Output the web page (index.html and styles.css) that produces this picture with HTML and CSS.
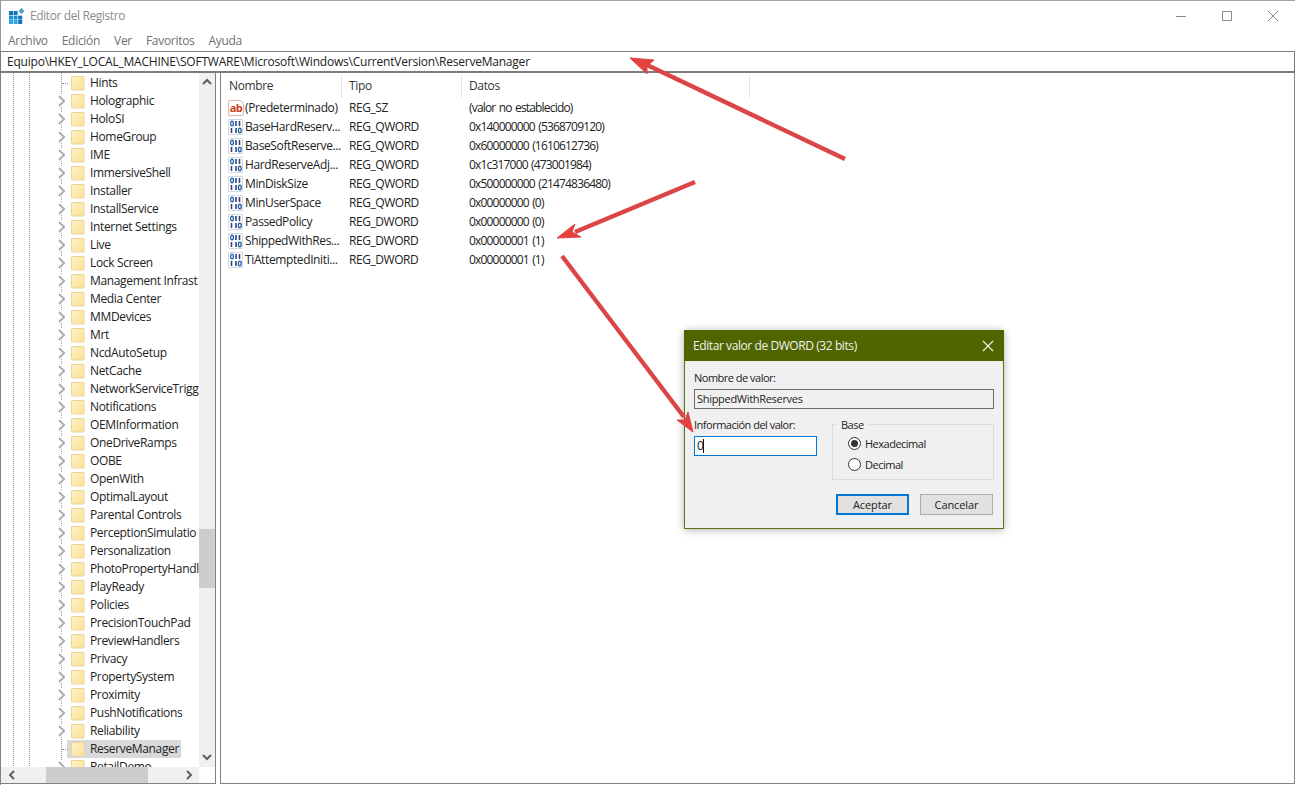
FILE: index.html
```html
<!DOCTYPE html>
<html lang="es">
<head>
<meta charset="utf-8">
<title>Editor del Registro</title>
<link rel="stylesheet" href="styles.css">
</head>
<body>
<svg class="defs" width="0" height="0" aria-hidden="true">
  <defs>
    <linearGradient id="fg" x1="0" y1="0" x2="1" y2="1"><stop offset="0" stop-color="#fef2c4"/><stop offset="1" stop-color="#fbe196"/></linearGradient>
    <symbol id="folder" viewBox="0 0 14 16">
      <path d="M.5 1.5h12.5v13.5H.5z" fill="url(#fg)" stroke="#efd595" stroke-width="1"/>
    </symbol>
    <symbol id="chev" viewBox="0 0 12 12"><path d="M3 1l5 5-5 5" fill="none" stroke="#adadad" stroke-width="2"/></symbol>
    <symbol id="bin" viewBox="0 0 16 16">
      <path d="M.5 .5h14v15H.5z" fill="#fff" stroke="#d2d9e4"/>
      <g fill="none" stroke="#1c5fa8" stroke-width="1.3">
        <ellipse cx="4" cy="4.5" rx="1.4" ry="2.3"/>
        <ellipse cx="11.8" cy="11.5" rx="1.4" ry="2.3"/>
        <path d="M8 2v5M11.5 2v5M3.5 9v5M8 9v5" stroke="#33427a" stroke-width="1.6"/>
      </g>
    </symbol>
  </defs>
</svg>
<div class="window">
  <header class="titlebar">
    <svg class="appicon" width="16" height="16" viewBox="0 0 16 16">
      <g fill="#0f74b8"><rect x="0" y="3" width="4" height="4"/><rect x="4.6" y="3" width="4" height="4"/><rect x="0" y="7.6" width="4" height="4" fill="#1c8fd0"/><rect x="4.6" y="7.6" width="4" height="4" fill="#1c8fd0"/><rect x="9.2" y="7.6" width="4" height="4"/><rect x="0" y="12" width="4" height="4" fill="#35a6e0"/><rect x="4.6" y="12" width="4" height="4" fill="#35a6e0"/><rect x="9.2" y="12" width="4" height="4"/></g>
      <path d="M12.5 0l3 3-3 3-3-3z" fill="#4aa3c4"/>
    </svg>
    <span class="title">Editor del Registro</span>
    <div class="caption">
      <svg width="12" height="12" viewBox="0 0 12 12"><path d="M1 6.5h10" stroke="#8a8a8a"/></svg>
      <svg width="12" height="12" viewBox="0 0 12 12"><path d="M1.5 1.5h9v9h-9z" fill="none" stroke="#8a8a8a"/></svg>
      <svg width="12" height="12" viewBox="0 0 12 12"><path d="M1 1l10 10M11 1L1 11" stroke="#8a8a8a"/></svg>
    </div>
  </header>
  <nav class="menu"><span>Archivo</span><span>Edición</span><span>Ver</span><span>Favoritos</span><span>Ayuda</span></nav>
  <div class="address">Equipo\HKEY_LOCAL_MACHINE\SOFTWARE\Microsoft\Windows\CurrentVersion\ReserveManager</div>
  <main class="panes">
    <section class="treepane">
      <div class="treebody">
        <div class="tree">
          <div class="node leaf"><i class="hline"></i><svg class="fold"><use href="#folder"/></svg><span>Hints</span></div>
          <div class="node"><svg class="chev"><use href="#chev"/></svg><svg class="fold"><use href="#folder"/></svg><span>Holographic</span></div>
          <div class="node"><svg class="chev"><use href="#chev"/></svg><svg class="fold"><use href="#folder"/></svg><span>HoloSI</span></div>
          <div class="node"><svg class="chev"><use href="#chev"/></svg><svg class="fold"><use href="#folder"/></svg><span>HomeGroup</span></div>
          <div class="node"><svg class="chev"><use href="#chev"/></svg><svg class="fold"><use href="#folder"/></svg><span>IME</span></div>
          <div class="node"><svg class="chev"><use href="#chev"/></svg><svg class="fold"><use href="#folder"/></svg><span>ImmersiveShell</span></div>
          <div class="node"><svg class="chev"><use href="#chev"/></svg><svg class="fold"><use href="#folder"/></svg><span>Installer</span></div>
          <div class="node"><svg class="chev"><use href="#chev"/></svg><svg class="fold"><use href="#folder"/></svg><span>InstallService</span></div>
          <div class="node"><svg class="chev"><use href="#chev"/></svg><svg class="fold"><use href="#folder"/></svg><span>Internet Settings</span></div>
          <div class="node"><svg class="chev"><use href="#chev"/></svg><svg class="fold"><use href="#folder"/></svg><span>Live</span></div>
          <div class="node"><svg class="chev"><use href="#chev"/></svg><svg class="fold"><use href="#folder"/></svg><span>Lock Screen</span></div>
          <div class="node"><svg class="chev"><use href="#chev"/></svg><svg class="fold"><use href="#folder"/></svg><span>Management Infrast</span></div>
          <div class="node"><svg class="chev"><use href="#chev"/></svg><svg class="fold"><use href="#folder"/></svg><span>Media Center</span></div>
          <div class="node"><svg class="chev"><use href="#chev"/></svg><svg class="fold"><use href="#folder"/></svg><span>MMDevices</span></div>
          <div class="node"><svg class="chev"><use href="#chev"/></svg><svg class="fold"><use href="#folder"/></svg><span>Mrt</span></div>
          <div class="node"><svg class="chev"><use href="#chev"/></svg><svg class="fold"><use href="#folder"/></svg><span>NcdAutoSetup</span></div>
          <div class="node"><svg class="chev"><use href="#chev"/></svg><svg class="fold"><use href="#folder"/></svg><span>NetCache</span></div>
          <div class="node"><svg class="chev"><use href="#chev"/></svg><svg class="fold"><use href="#folder"/></svg><span>NetworkServiceTrigg</span></div>
          <div class="node"><svg class="chev"><use href="#chev"/></svg><svg class="fold"><use href="#folder"/></svg><span>Notifications</span></div>
          <div class="node"><svg class="chev"><use href="#chev"/></svg><svg class="fold"><use href="#folder"/></svg><span>OEMInformation</span></div>
          <div class="node"><svg class="chev"><use href="#chev"/></svg><svg class="fold"><use href="#folder"/></svg><span>OneDriveRamps</span></div>
          <div class="node"><svg class="chev"><use href="#chev"/></svg><svg class="fold"><use href="#folder"/></svg><span>OOBE</span></div>
          <div class="node"><svg class="chev"><use href="#chev"/></svg><svg class="fold"><use href="#folder"/></svg><span>OpenWith</span></div>
          <div class="node"><svg class="chev"><use href="#chev"/></svg><svg class="fold"><use href="#folder"/></svg><span>OptimalLayout</span></div>
          <div class="node"><svg class="chev"><use href="#chev"/></svg><svg class="fold"><use href="#folder"/></svg><span>Parental Controls</span></div>
          <div class="node"><svg class="chev"><use href="#chev"/></svg><svg class="fold"><use href="#folder"/></svg><span>PerceptionSimulatio</span></div>
          <div class="node"><svg class="chev"><use href="#chev"/></svg><svg class="fold"><use href="#folder"/></svg><span>Personalization</span></div>
          <div class="node"><svg class="chev"><use href="#chev"/></svg><svg class="fold"><use href="#folder"/></svg><span>PhotoPropertyHandl</span></div>
          <div class="node"><svg class="chev"><use href="#chev"/></svg><svg class="fold"><use href="#folder"/></svg><span>PlayReady</span></div>
          <div class="node"><svg class="chev"><use href="#chev"/></svg><svg class="fold"><use href="#folder"/></svg><span>Policies</span></div>
          <div class="node"><svg class="chev"><use href="#chev"/></svg><svg class="fold"><use href="#folder"/></svg><span>PrecisionTouchPad</span></div>
          <div class="node"><svg class="chev"><use href="#chev"/></svg><svg class="fold"><use href="#folder"/></svg><span>PreviewHandlers</span></div>
          <div class="node"><svg class="chev"><use href="#chev"/></svg><svg class="fold"><use href="#folder"/></svg><span>Privacy</span></div>
          <div class="node"><svg class="chev"><use href="#chev"/></svg><svg class="fold"><use href="#folder"/></svg><span>PropertySystem</span></div>
          <div class="node"><svg class="chev"><use href="#chev"/></svg><svg class="fold"><use href="#folder"/></svg><span>Proximity</span></div>
          <div class="node"><svg class="chev"><use href="#chev"/></svg><svg class="fold"><use href="#folder"/></svg><span>PushNotifications</span></div>
          <div class="node"><svg class="chev"><use href="#chev"/></svg><svg class="fold"><use href="#folder"/></svg><span>Reliability</span></div>
          <div class="node leaf selected"><i class="hline"></i><svg class="fold"><use href="#folder"/></svg><span>ReserveManager</span></div>
          <div class="node"><svg class="chev"><use href="#chev"/></svg><svg class="fold"><use href="#folder"/></svg><span>RetailDemo</span></div>
        </div>
        <div class="vscroll">
          <svg class="sbtn" viewBox="0 0 16 18"><path d="M4 11l4-4 4 4" fill="none" stroke="#606060" stroke-width="2"/></svg>
          <div class="vtrack"><div class="vthumb"></div></div>
          <svg class="sbtn" viewBox="0 0 16 18"><path d="M4 6l4 4 4-4" fill="none" stroke="#606060" stroke-width="2"/></svg>
        </div>
      </div>
      <div class="hscroll">
        <svg class="hbtn" viewBox="0 0 16 16"><path d="M10 4L6 8l4 4" fill="none" stroke="#606060" stroke-width="2"/></svg>
        <div class="htrack"><div class="hthumb"></div></div>
        <svg class="hbtn" viewBox="0 0 16 16"><path d="M6 4l4 4-4 4" fill="none" stroke="#606060" stroke-width="2"/></svg>
      </div>
    </section>
    <section class="listpane">
      <div class="row head"><span class="c1">Nombre</span><span class="c2">Tipo</span><span class="c3">Datos</span></div>
      <div class="row item"><span class="c1"><span class="ab">ab</span>(Predeterminado)</span><span class="c2">REG_SZ</span><span class="c3">(valor no establecido)</span></div>
      <div class="row item"><span class="c1"><svg class="ico"><use href="#bin"/></svg>BaseHardReserv...</span><span class="c2">REG_QWORD</span><span class="c3">0x140000000 (5368709120)</span></div>
      <div class="row item"><span class="c1"><svg class="ico"><use href="#bin"/></svg>BaseSoftReserve...</span><span class="c2">REG_QWORD</span><span class="c3">0x60000000 (1610612736)</span></div>
      <div class="row item"><span class="c1"><svg class="ico"><use href="#bin"/></svg>HardReserveAdj...</span><span class="c2">REG_QWORD</span><span class="c3">0x1c317000 (473001984)</span></div>
      <div class="row item"><span class="c1"><svg class="ico"><use href="#bin"/></svg>MinDiskSize</span><span class="c2">REG_QWORD</span><span class="c3">0x500000000 (21474836480)</span></div>
      <div class="row item"><span class="c1"><svg class="ico"><use href="#bin"/></svg>MinUserSpace</span><span class="c2">REG_QWORD</span><span class="c3">0x00000000 (0)</span></div>
      <div class="row item"><span class="c1"><svg class="ico"><use href="#bin"/></svg>PassedPolicy</span><span class="c2">REG_DWORD</span><span class="c3">0x00000000 (0)</span></div>
      <div class="row item"><span class="c1"><svg class="ico"><use href="#bin"/></svg>ShippedWithRes...</span><span class="c2">REG_DWORD</span><span class="c3">0x00000001 (1)</span></div>
      <div class="row item"><span class="c1"><svg class="ico"><use href="#bin"/></svg>TiAttemptedIniti...</span><span class="c2">REG_DWORD</span><span class="c3">0x00000001 (1)</span></div>
    </section>
  </main>
</div>

<div class="dialog">
  <div class="dtitle"><span>Editar valor de DWORD (32 bits)</span>
    <svg width="12" height="12" viewBox="0 0 12 12"><path d="M1 1l10 10M11 1L1 11" stroke="#f2f2f2" stroke-width="1.1"/></svg>
  </div>
  <div class="dbody">
    <label class="dlabel">Nombre de valor:</label>
    <div class="dname">ShippedWithReserves</div>
    <div class="dmid">
      <div class="dinfo">
        <label class="dlabel2">Información del valor:</label>
        <div class="dinput">0<i class="caret"></i></div>
      </div>
      <fieldset class="dbase">
        <legend>Base</legend>
        <div class="radio"><i class="dot on"></i>Hexadecimal</div>
        <div class="radio"><i class="dot"></i>Decimal</div>
      </fieldset>
    </div>
    <div class="dbtns"><div class="btn primary">Aceptar</div><div class="btn">Cancelar</div></div>
  </div>
</div>

<svg class="arrows" width="1295" height="785" viewBox="0 0 1295 785" aria-hidden="true">
  <g fill="#e8403f" stroke="#dc4545">
    <path d="M845 159L645 64" stroke-width="4.4" fill="none"/>
    <path d="M630 58L654 60 647 66 647 74z" stroke-width="1"/>
    <path d="M695 182L575 232" stroke-width="4.4" fill="none"/>
    <path d="M557 238L575 224 572 232 581 237z" stroke-width="1"/>
    <path d="M562 256L684 417" stroke-width="4.4" fill="none"/>
    <path d="M693 432L677 420 685 420 688 412z" stroke-width="1"/>
  </g>
</svg>
</body>
</html>
```
FILE: styles.css
```css
* { box-sizing: border-box; }
html, body { margin: 0; padding: 0; height: 100%; overflow: hidden; }
body { background: #fff; font: 12px/16px "Open Sans", "Noto Sans", sans-serif; color: #1a1a1a; position: relative; letter-spacing: -0.35px; }
.defs { position: absolute; }
.window { height: 785px; display: flex; flex-direction: column; border-top: 1px solid #a2a2a2; border-left: 1px solid #8f9aa0; }
.titlebar { height: 29px; display: flex; align-items: center; padding-left: 8px; flex: none; }
.appicon { margin-top: 1px; }
.title { margin-left: 5px; color: #8c8c8c; margin-top: 1px; letter-spacing: -0.4px; }
.caption { margin-left: auto; display: flex; gap: 34px; padding-right: 16px; margin-top: 1px; }
.menu { height: 21px; display: flex; flex: none; gap: 14px; padding-left: 7px; color: #707070; align-items: center; background: #fff; letter-spacing: -0.3px; }
.address { height: 22px; flex: none; border: 1px solid #7c7c7c; border-bottom-width: 2px; border-left: 1px solid #7c7c7c; padding: 1px 0 0 6px; line-height: 17px; color: #222; margin-left: -1px; background: #fff; letter-spacing: -0.22px; }
.panes { flex: 1; display: flex; min-height: 0; padding-bottom: 1px; }
.treepane { width: 216px; flex: none; display: flex; flex-direction: column; border-right: 1px solid #828282; border-bottom: 1px solid #828282; overflow: hidden; margin-left: -1px; border-left: 1px solid #828282; }
.treebody { flex: 1; display: flex; min-height: 0; }
.tree { flex: 1; min-width: 0; overflow: hidden; padding-top: 1px; background-image: linear-gradient(#9a9a9a 50%, transparent 50%), linear-gradient(#9a9a9a 50%, transparent 50%), linear-gradient(#9a9a9a 50%, transparent 50%); background-size: 1px 2px; background-repeat: repeat-y; background-position: 12px 0, 28px 0, 60px 0; }
.node { height: 18px; display: flex; align-items: center; position: relative; padding-left: 55px; white-space: nowrap; color: #222; }
.chev { width: 12px; height: 12px; flex: none; margin-right: 3px; background: #fff; }
.leaf { padding-left: 70px; }
.hline { position: absolute; left: 61px; top: 9px; width: 6px; border-top: 1px dotted #9a9a9a; }
.fold { width: 14px; height: 16px; flex: none; }
.node span { margin-left: 5px; }
.selected::before { content: ""; position: absolute; left: 66px; top: 0; width: 114px; height: 18px; background: #d9d9d9; }
.selected .fold, .selected span { position: relative; }
.vscroll { width: 16px; flex: none; background: #f0f0f0; display: flex; flex-direction: column; }
.sbtn { width: 16px; height: 18px; flex: none; }
.vtrack { flex: 1; padding-top: 438px; }
.vthumb { height: 59px; background: #cdcdcd; }
.hscroll { height: 16px; flex: none; display: flex; background: #f0f0f0; margin-right: 16px; }
.hbtn { width: 16px; height: 16px; flex: none; margin-left: 3px; margin-right: 2px; }
.htrack { flex: 1; padding-left: 24px; }
.hthumb { width: 102px; height: 16px; background: #cdcdcd; }
.listpane { flex: 1; margin-left: 4px; border-left: 1px solid #828282; border-bottom: 1px solid #828282; border-right: 1px solid #828282; padding-top: 1px; }
.row { display: grid; grid-template-columns: 121px 120px 288px; white-space: nowrap; }
.row span { display: flex; align-items: center; }
.head { height: 24px; color: #333; }
.head .c1 { padding-left: 8px; border-right: 1px solid #e5e5e5; }
.head .c2 { padding-left: 7px; border-right: 1px solid #e5e5e5; }
.head .c3 { padding-left: 7px; border-right: 1px solid #e5e5e5; }
.item { height: 19px; color: #222; }
.item .c1 { padding-left: 7px; overflow: hidden; letter-spacing: -0.38px; }
.item .c2 { padding-left: 7px; letter-spacing: -0.45px; }
.item .c3 { padding-left: 7px; letter-spacing: -0.82px; word-spacing: 1px; }
.ico { width: 16px; height: 16px; flex: none; margin-right: 1px; }
.row .ab { width: 16px; height: 16px; flex: none; margin-right: 1px; border: 1px solid #dcb9a4; border-radius: 2px 5px 2px 2px; color: #c8441b; font-weight: 700; font-size: 11px; line-height: 12px; justify-content: center; letter-spacing: -0.5px; }
.dialog { position: absolute; left: 684px; top: 330px; width: 320px; height: 199px; background: #f0f0f0; border: 1px solid #5c7015; box-shadow: 0 1px 8px rgba(0,0,0,.3); color: #222; }
.dtitle { height: 31px; margin: -1px -1px 0; background: #4e6500; color: #f2f2f2; display: flex; justify-content: space-between; align-items: center; padding: 0 10px 0 9px; letter-spacing: -0.42px; }
.dbody { padding: 9px 9px 0; display: flex; flex-direction: column; font-size: 11px; letter-spacing: -0.5px; }
.dlabel { height: 16px; line-height: 16px; }
.dname { height: 20px; margin-top: 3px; border: 1px solid #6e6e6e; background: #f0f0f0; padding-left: 2px; line-height: 17px; letter-spacing: -0.3px; }
.dmid { display: flex; margin-top: 8px; justify-content: space-between; align-items: flex-start; }
.dinfo { width: 123px; display: flex; flex-direction: column; padding-top: 1px; }
.dlabel2 { height: 16px; line-height: 14px; }
.dinput { height: 20px; margin-top: 2px; background: #fff; border: 1px solid #0078d7; padding-left: 2px; line-height: 18px; display: flex; align-items: center; font-size: 12px; }
.caret { width: 1px; height: 14px; background: #111; }
.dbase { width: 162px; height: 56px; margin: 7px 0 0; padding: 8px 0 0 15px; border: 1px solid #dcdcdc; position: relative; }
.dbase legend { position: absolute; left: 3px; top: -7px; padding: 0 5px; background: #f0f0f0; line-height: 14px; }
.radio { height: 21px; display: flex; align-items: center; }
.dot { width: 13px; height: 13px; border-radius: 50%; border: 1px solid #333; background: #fff; margin-right: 4px; position: relative; }
.dot.on::after { content: ""; position: absolute; left: 2px; top: 2px; width: 7px; height: 7px; border-radius: 50%; background: #333; }
.dbtns { display: flex; justify-content: flex-end; gap: 11px; margin-top: 14px; padding-right: 1px; letter-spacing: -0.1px; }
.btn { width: 73px; height: 21px; background: #e1e1e1; border: 1px solid #adadad; text-align: center; line-height: 19px; }
.primary { border: 2px solid #0078d7; line-height: 17px; }
.arrows { position: absolute; left: 0; top: 0; pointer-events: none; }
```
